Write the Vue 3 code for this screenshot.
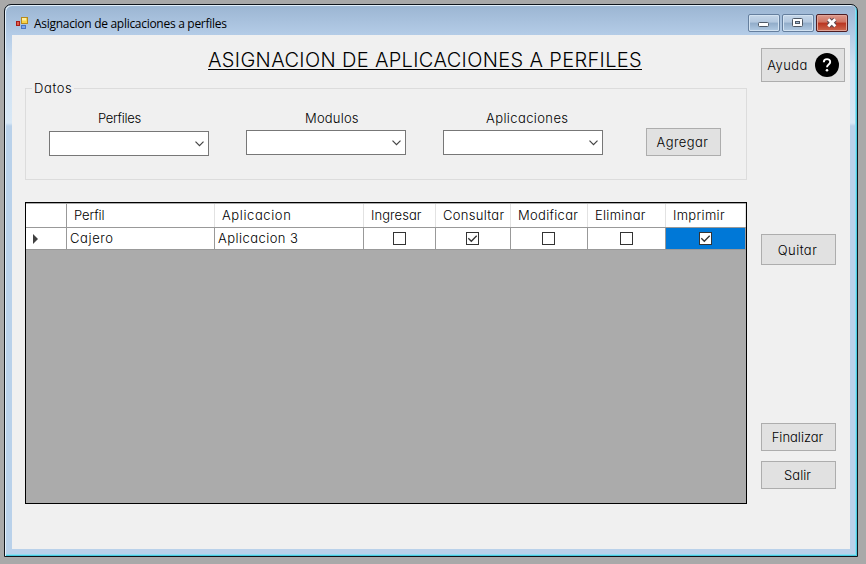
<script setup>
import { ref } from 'vue'

const combos = ref([
  { id: 'perfiles', label: 'Perfiles' },
  { id: 'modulos', label: 'Modulos' },
  { id: 'aplicaciones', label: 'Aplicaciones' },
])
const columns = ['Perfil', 'Aplicacion', 'Ingresar', 'Consultar', 'Modificar', 'Eliminar', 'Imprimir']
const rows = ref([
  { perfil: 'Cajero', aplicacion: 'Aplicacion 3', permisos: [false, true, false, false, true] },
])
const selected = ref(4)
</script>

<template>
  <div class="desktop">
    <div class="window">
      <header class="titlebar">
        <svg class="app-icon" width="13" height="13" viewBox="0 0 13 13">
          <rect x="5.5" y=".5" width="6" height="6" fill="#f8d34a" stroke="#b88a1c" />
          <rect x="6" y="1" width="4" height="2.500" fill="#fff0a0" />
          <rect x=".5" y="4.500" width="3" height="4" fill="#e0604c" stroke="#a81c18" />
          <rect x="5.500" y="8.500" width="4" height="3" fill="#7aa5ec" stroke="#4a75c4" />
        </svg>
        <span class="caption">Asignacion de aplicaciones a perfiles</span>
        <div class="controls">
          <button class="ctl">
            <svg width="30" height="16"><rect x="9.500" y="7.500" width="10" height="4" rx="1" fill="#fff" stroke="#4d5866" /></svg>
          </button>
          <button class="ctl">
            <svg width="30" height="16"><rect x="9.500" y="3.500" width="10" height="8" rx="1" fill="#fff" stroke="#4d5866" /><rect x="12.500" y="6.500" width="4" height="2" fill="#9fb8d4" stroke="#4d5866" /></svg>
          </button>
          <button class="ctl close">
            <svg width="30" height="16"><path d="M11.500 4.500l6.500 6.500M18 4.500l-6.500 6.500" stroke="#5b4850" stroke-width="4.800" /><path d="M11.300 4.300l7 7M18.200 4.300l-7 7" stroke="#fff" stroke-width="2.800" /></svg>
          </button>
        </div>
      </header>
      <main class="client">
        <section class="left">
          <h1><span>ASIGNACION DE APLICACIONES A PERFILES</span></h1>
          <fieldset>
            <legend>Datos</legend>
            <div v-for="c in combos" :key="c.id" class="field" :class="c.id">
              <label><span>{{ c.label }}</span></label>
              <div class="combo">
                <svg width="9" height="6" viewBox="0 0 9 6"><path d="M.5.7l4 4 4-4" fill="none" stroke="#444" stroke-width="1.200" /></svg>
              </div>
            </div>
            <button class="btn agregar"><span>Agregar</span></button>
          </fieldset>
          <div class="grid">
            <div class="row head">
              <div class="cell"></div>
              <div v-for="c in columns" :key="c" class="cell"><span :class="c.toLowerCase()">{{ c }}</span></div>
            </div>
            <div v-for="r in rows" :key="r.perfil" class="row data">
              <div class="cell marker"><svg width="5" height="10"><path d="M0 0l5 5-5 5z" fill="#404040" /></svg></div>
              <div class="cell text"><span class="cajero">{{ r.perfil }}</span></div>
              <div class="cell text"><span class="app3">{{ r.aplicacion }}</span></div>
              <div v-for="(p, i) in r.permisos" :key="i" class="cell check" :class="{ selected: i === selected }">
                <svg width="13" height="13"><rect x=".5" y=".5" width="12" height="12" fill="#fff" stroke="#333" /><path v-if="p" d="M2.300 6.300l3 3 5.400-5.600" fill="none" stroke="#333" stroke-width="1.300" /></svg>
              </div>
            </div>
          </div>
        </section>
        <aside class="right">
          <button class="btn ayuda">
            <span>Ayuda</span>
            <svg width="24" height="24" viewBox="0 0 24 24"><circle cx="12" cy="12" r="12" fill="#000" /><path d="M8.800 9.300c0-4.200 6.400-4.200 6.400-.3 0 2.500-3.200 2.600-3.200 5.300" fill="none" stroke="#fff" stroke-width="1.900" /><circle cx="12" cy="17.300" r="1.300" fill="#fff" /></svg>
          </button>
          <button class="btn quitar"><span>Quitar</span></button>
          <button class="btn finalizar"><span>Finalizar</span></button>
          <button class="btn salir"><span>Salir</span></button>
        </aside>
      </main>
    </div>
  </div>
</template>

<style>
body { overflow: hidden; }
</style>

<style scoped>
* { box-sizing: border-box; }
.desktop { width: 866px; height: 564px; padding: 4px 8px 7px 4px; background: #a9a9a9; font: 300 13px/16px Inter, "Liberation Sans", sans-serif; font-feature-settings: "cv11" 1; color: #000; }
.window { width: 854px; height: 553px; border: 1px solid #10151b; border-radius: 7px 7px 0 0; padding: 0 6px 6px; background: linear-gradient(#9bb5d2 0, #b4cce7 30px, #cfe0f1 60px, #d8e8f6 118px, #b9d1ea 121px, #b9d1ea 100%); box-shadow: inset 1px 1px 0 #e4f0fa, inset -1px -1px 0 #48cbe0, inset -2px -2px 0 #8fdcf0; }
.titlebar { height: 30px; display: flex; align-items: flex-start; padding: 0 3px 0 5px; }
.app-icon { margin-top: 12px; }
.caption { margin: 11px 0 0 5px; font: 12px/16px "Open Sans", "Noto Sans", sans-serif; letter-spacing: -.29px; color: #000; white-space: nowrap; }
.controls { margin-left: auto; display: flex; gap: 2px; padding-top: 9px; }
.ctl { width: 32px; height: 18px; padding: 0; border: 1px solid #657f9e; border-radius: 2px; display: flex; background: linear-gradient(#c6d7e9 0, #b3c8df 45%, #91acc9 50%, #b1cae3 100%); box-shadow: inset 0 0 0 1px #d3e3f2; }
.ctl.close { border-color: #4e1d22; background: linear-gradient(#dd9a8d 0, #cf7260 45%, #b9331f 50%, #cd6a50 100%); box-shadow: inset 0 0 0 1px #e2a598; }
.ctl svg { display: block; }
.client { width: 838px; height: 514px; margin-left: 1px; background: #f0f0f0; display: flex; padding-left: 13px; gap: 14px; }
.left { width: 722px; }
h1 { margin: 0; height: 53px; padding: 11px 0 0 183px; font-size: 20px; line-height: 28px; font-weight: 300; letter-spacing: .35px; white-space: nowrap; display: flex; }
h1 span { border-bottom: 1px solid #000; height: 24px; }
fieldset { margin: -8px 0 0; border: 1px solid #dcdcdc; height: 100px; min-width: 0; padding: 0 25px 0 23px; display: flex; align-items: flex-start; }
legend { margin-left: -17px; padding: 0 2px; height: 16px; letter-spacing: .6px; }
.field { width: 160px; margin-right: 37px; padding-top: 14px; }
.aplicaciones { margin-right: 43px; }
label { display: block; height: 20px; padding-left: 49px; }
.modulos label { padding-left: 59px; letter-spacing: .2px; }
.aplicaciones label { padding-left: 43px; letter-spacing: .4px; }
.perfiles label { letter-spacing: -.3px; }
.combo { height: 25px; border: 1px solid #777; background: #fff; display: flex; justify-content: flex-end; align-items: center; padding-right: 4px; }
.perfiles .combo { margin-top: 1px; }
.btn { width: 75px; height: 28px; padding: 0 2px 0 0; border: 1px solid #adadad; background: #e1e1e1; font: inherit; font-feature-settings: inherit; letter-spacing: .45px; color: #000; display: flex; align-items: center; justify-content: center; white-space: nowrap; }
.agregar { margin-top: 32px; }
.grid { width: 722px; height: 302px; margin-top: 22px; border: 1px solid #000; background: #ababab; }
.row { display: grid; grid-template-columns: 41px 148px 149px 72px 75px 77px 78px 80px; background: #fff; }
.head { height: 25px; border-bottom: 1px solid #999; border-top: 1px solid #aaa; }
.data { height: 22px; border-bottom: 1px solid #999; }
.cell { border-right: 1px solid #999; display: flex; align-items: center; padding-left: 3px; white-space: nowrap; }
.cell.text { padding-bottom: 1px; }
.head .cell { border-color: #e2e2e2; padding: 0 0 1px 7px; letter-spacing: .3px; }
.head .cell:first-child { border-color: #999; }
.perfil { letter-spacing: -.1px; }
.aplicacion { letter-spacing: .6px; }
.ingresar { letter-spacing: .05px; }
.cajero { letter-spacing: .6px; }
.app3 { letter-spacing: .45px; }
.cell.marker { padding-left: 7px; }
.cell.check { justify-content: center; padding: 0 1px 0 0; }
.cell.selected { background: #0078d7; padding: 0; }
.right { width: 84px; display: flex; flex-direction: column; padding-top: 13px; }
.ayuda { width: 84px; height: 34px; gap: 7px; padding: 0; }
.quitar { height: 31px; margin-top: 152px; }
.finalizar { margin-top: 158px; letter-spacing: 0; }
.salir { margin-top: 10px; letter-spacing: 0; }
</style>
